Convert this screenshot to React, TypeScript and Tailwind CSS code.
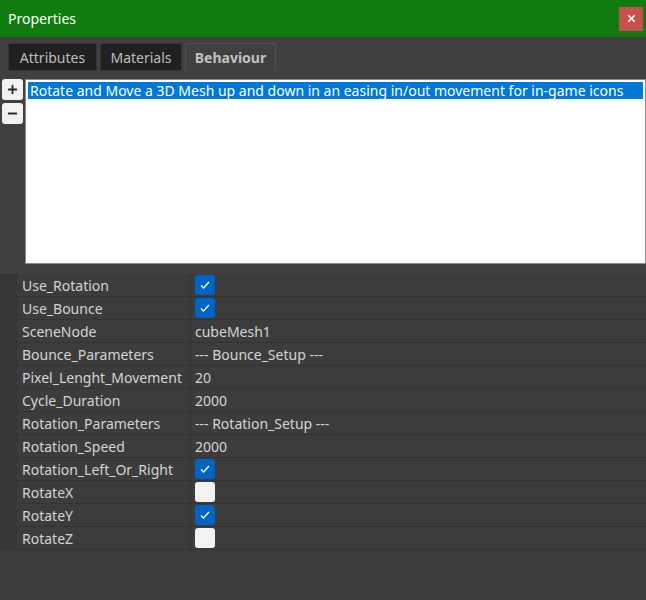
import { Plus, Minus, X } from "lucide-react";

type Prop = { name: string; value?: string; check?: boolean };

const PROPS: Prop[] = [
  { name: "Use_Rotation", check: true },
  { name: "Use_Bounce", check: true },
  { name: "SceneNode", value: "cubeMesh1" },
  { name: "Bounce_Parameters", value: "--- Bounce_Setup ---" },
  { name: "Pixel_Lenght_Movement", value: "20" },
  { name: "Cycle_Duration", value: "2000" },
  { name: "Rotation_Parameters", value: "--- Rotation_Setup ---" },
  { name: "Rotation_Speed", value: "2000" },
  { name: "Rotation_Left_Or_Right", check: true },
  { name: "RotateX", check: false },
  { name: "RotateY", check: true },
  { name: "RotateZ", check: false },
];

const TABS = [
  { label: "Attributes", w: "w-[89px]" },
  { label: "Materials", w: "w-[82px]" },
  { label: "Behaviour", w: "w-[91px]" },
];

function CheckBox({ on }: { on: boolean }) {
  return on ? (
    <div className="w-[20px] h-[20px] rounded-[3px] bg-[#0063c6] flex items-center justify-center">
      <svg width="12" height="10" viewBox="0 0 12 10">
        <path d="M2 5.5 L4.5 8 L10 2" stroke="white" strokeWidth="1.3" fill="none" />
      </svg>
    </div>
  ) : (
    <div className="w-[20px] h-[20px] rounded-[3px] bg-[#f2f2f2]" />
  );
}

export default function App() {
  return (
    <div className="w-[646px] h-[600px] flex flex-col bg-[#3c3c3c] text-[#d4d4d4] overflow-hidden" style={{ fontFamily: '"Noto Sans", "Open Sans", sans-serif' }}>
      <div className="h-[37px] bg-[#107c10] flex items-center justify-between pl-[8px] pr-[3px] shrink-0">
        <span className="text-white text-[14px]">Properties</span>
        <div className="w-[24px] h-[24px] bg-[#c75050] flex items-center justify-center">
          <X size={11} strokeWidth={3.5} className="text-white" />
        </div>
      </div>

      <div className="bg-[#404040] flex flex-col">
        <div className="flex gap-[3px] pl-[8px] pt-[6px] h-[34px]">
          {TABS.map((t) => {
            const active = t.label === "Behaviour";
            return (
              <div
                key={t.label}
                className={`${t.w} flex items-center justify-center text-[14px] border rounded-t-[2px] ${
                  active
                    ? "bg-[#404040] border-[#4e4e4e] border-b-0 font-bold text-[#c0c0c0]"
                    : "bg-[#202020] border-[#353535] text-[#bdbdbd] h-[28px]"
                }`}
              >
                {t.label}
              </div>
            );
          })}
        </div>

        <div className="flex gap-[2px] pl-[2px] pt-[8px] pb-[10px]">
          <div className="flex flex-col gap-[3px]">
            <div className="w-[21px] h-[21px] bg-[#f2f2f2] rounded-[3px] flex items-center justify-center">
              <Plus size={13} strokeWidth={3.5} className="text-[#2a2a2a]" />
            </div>
            <div className="w-[21px] h-[21px] bg-[#f2f2f2] rounded-[3px] flex items-center justify-center">
              <Minus size={13} strokeWidth={3.5} className="text-[#2a2a2a]" />
            </div>
          </div>
          <div className="flex-1 h-[185px] bg-white border border-[#8a8a8a] p-[2px]">
            <div className="bg-[#0078d7] text-white text-[14px] leading-[17px] pl-[2px] whitespace-nowrap">
              Rotate and Move a 3D Mesh up and down in an easing in/out movement for in-game icons
            </div>
          </div>
        </div>
      </div>

      <div className="flex">
        <div className="w-[17px] bg-[#363636]" />
        <div className="flex-1 flex flex-col">
          {PROPS.map((p) => (
            <div key={p.name} className="h-[23px] flex border-b border-[#333333] text-[14px]">
              <div className="w-[174px] pl-[5px] flex items-center border-r border-[#333333] whitespace-nowrap">{p.name}</div>
              <div className="flex-1 pl-[4px] flex items-center">
                {p.check === undefined ? p.value : <CheckBox on={p.check} />}
              </div>
            </div>
          ))}
        </div>
      </div>
    </div>
  );
}
